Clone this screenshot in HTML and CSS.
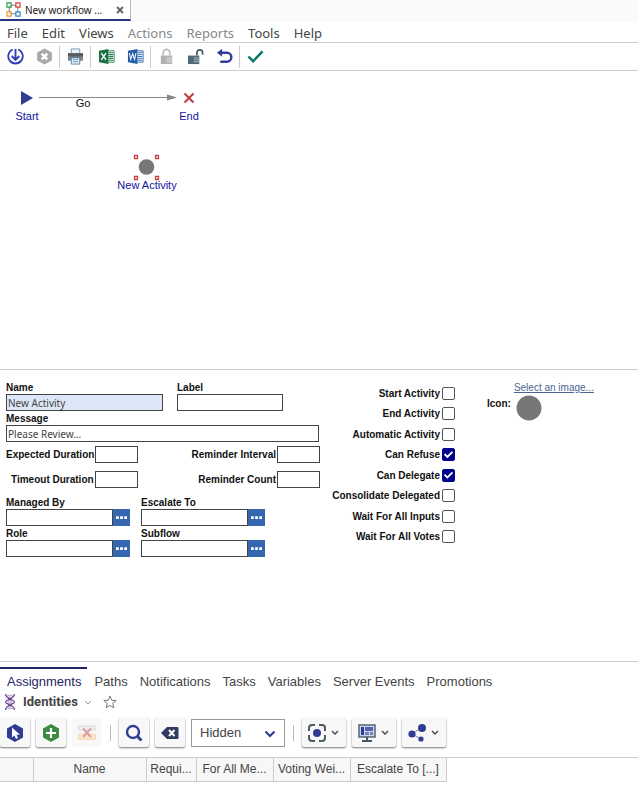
FILE: index.html
```html
<!DOCTYPE html>
<html lang="en">
<head>
<meta charset="utf-8">
<title>New workflow</title>
<link rel="stylesheet" href="styles.css">
</head>
<body>
<header class="window-tabs">
  <div class="window-tab">
    <svg class="flow-icon" viewBox="0 0 16 16" fill="none" stroke-width="1.3"><path d="M5 3.5h6M3.5 5v6M12.5 5v6M5 12.5h6" stroke="#6b7482" stroke-width="1"/><path d="M1 1h4.500v4.500H1z" stroke="#2f9b51"/><path d="M10.500 1H15v4.500h-4.500z" stroke="#d8403c"/><path d="M1 10.500h4.500V15H1z" stroke="#e99a2c"/><path d="M10.500 10.500H15V15h-4.500z" stroke="#3288cf"/></svg>
    <span class="window-title">New workflow ...</span>
    <button class="close" aria-label="Close tab"><svg viewBox="0 0 8 8"><path d="M1 1l6 6M7 1L1 7" stroke="#666" stroke-width="2"/></svg></button>
  </div>
</header>
<nav class="menu">
  <a href="#">File</a><a href="#">Edit</a><a href="#">Views</a><a href="#" class="off">Actions</a><a href="#" class="off">Reports</a><a href="#">Tools</a><a href="#">Help</a>
</nav>
<div class="toolbar">
  <button aria-label="Save"><svg viewBox="0 0 18 18" fill="none" stroke="#2f3dba" stroke-width="1.900"><path d="M6 1.600a7.700 7.700 0 1 0 6 0"/><path d="M9 1v11M5 8.500l4 4 4-4" stroke-width="2"/></svg></button>
  <button aria-label="Cancel"><svg viewBox="0 0 18 18"><path d="M9 .5l7.800 4.300v8.400L9 17.500l-7.800-4.300V4.800z" fill="#a9a9a9"/><path d="M6 6l6 6M12 6l-6 6" stroke="#fff" stroke-width="2.600"/></svg></button>
  <i class="rule"></i>
  <button aria-label="Print"><svg viewBox="0 0 18 18"><path d="M4.500 1h9v6h-9z" fill="#eaf2f8" stroke="#7296b0"/><path d="M1 5.500h16v8H1z" fill="#7d8387"/><path d="M1 5.500h16V9H1z" fill="#565d62"/><path d="M4.500 10.500h9v6.500h-9z" fill="#fff" stroke="#537c9b"/><path d="M6 12.500h6M6 14.500h6" stroke="#4c91c3" stroke-width="1.200"/></svg></button>
  <i class="rule"></i>
  <button aria-label="Export to Excel"><svg viewBox="0 0 18 18"><path d="M9 3h8v12H9z" fill="#fff" stroke="#278150"/><path d="M11 5h5M11 7h5M11 9h5M11 11h5M11 13h5" stroke="#278150" stroke-width="1.200"/><path d="M1 3l10-2v16L1 15z" fill="#1d7145"/><path d="M3.500 5.500l5 7M8.500 5.500l-5 7" stroke="#fff" stroke-width="1.400"/></svg></button>
  <button aria-label="Export to Word"><svg viewBox="0 0 18 18"><path d="M9 3h8v12H9z" fill="#fff" stroke="#2b66af"/><path d="M11 5h5M11 7h5M11 9h5M11 11h5M11 13h5" stroke="#2b66af"/><path d="M1 3l10-2v16L1 15z" fill="#265da6"/><path d="M2.500 5.500L4 12l2-6 2 6 1.500-6.500" fill="none" stroke="#fff" stroke-width="1.100"/></svg></button>
  <i class="rule"></i>
  <button aria-label="Lock"><svg viewBox="0 0 18 18"><path d="M5.500 8V5a3.500 3.500 0 0 1 7 0v3" fill="none" stroke="#bcbcbc" stroke-width="1.800"/><path d="M3 8h12v9H3z" fill="#b2b2b2"/><path d="M9 10.500h6M9 12.500h6M9 14.500h6" stroke="#ddd"/></svg></button>
  <button aria-label="Unlock"><svg viewBox="0 0 18 18"><path d="M10.500 8V5a3 3 0 0 1 6 0v2" fill="none" stroke="#425763" stroke-width="1.800"/><path d="M1 8h12v9H1z" fill="#516a77"/><path d="M7 10.500h6M7 12.500h6M7 14.500h6" stroke="#aab7be"/></svg></button>
  <button aria-label="Undo"><svg viewBox="0 0 18 18" fill="none" stroke="#323f99" stroke-width="2.600"><path d="M4 5h7.500a4.700 4.700 0 0 1 0 9.500H4.500"/><path d="M6.500.8v8.400L1 5z" fill="#323f99" stroke="none"/></svg></button>
  <i class="rule"></i>
  <button aria-label="Approve"><svg viewBox="0 0 18 18"><path d="M1.500 9l5 5L16.500 3.500" fill="none" stroke="#08766a" stroke-width="2.600"/></svg></button>
</div>
<main>
  <section class="canvas" aria-label="Workflow diagram">
    <svg class="diagram" width="220" height="130" viewBox="0 0 220 130">
      <path d="M21 20v14l12-7z" fill="#313d94"/>
      <path d="M39 26.500h130" stroke="#888"/><path d="M167 23.500v6l10-3z" fill="#888"/>
      <path d="M184.500 22.500l9 9M193.500 22.500l-9 9" stroke="#c23a3c" stroke-width="2"/>
      <circle cx="146.500" cy="96" r="7.800" fill="#777"/>
      <g fill="#fff" stroke="#c94242" stroke-width="1.300"><path d="M134.500 84.500h3v3h-3zM155.500 84.500h3v3h-3zM134.500 105.500h3v3h-3zM155.500 105.500h3v3h-3z"/></g>
      <g class="node-text"><text x="27" y="49">Start</text><text x="189" y="49">End</text><text x="147" y="118">New Activity</text><text class="edge-text" x="83" y="36">Go</text></g>
    </svg>
  </section>
  <section class="properties">
    <form class="details">
      <div class="row names">
        <label class="stack wide">Name<input class="named" value="New Activity"></label>
        <label class="stack">Label<input></label>
      </div>
      <label class="stack">Message<input value="Please Review..."></label>
      <div class="row numbers"><label>Expected Duration<input></label><label>Reminder Interval<input></label></div>
      <div class="row numbers second"><label>Timeout Duration<input></label><label>Reminder Count<input></label></div>
      <div class="pickers">
        <div class="stack"><label for="managed">Managed By</label><div class="pick"><input id="managed"><button type="button" aria-label="Choose manager"><svg viewBox="0 0 12 3"><path d="M0 0h3v3H0zM4.500 0h3v3h-3zM9 0h3v3H9z" fill="#fff"/></svg></button></div></div>
        <div class="stack"><label for="escalate">Escalate To</label><div class="pick"><input id="escalate"><button type="button" aria-label="Choose escalation"><svg viewBox="0 0 12 3"><path d="M0 0h3v3H0zM4.500 0h3v3h-3zM9 0h3v3H9z" fill="#fff"/></svg></button></div></div>
        <div class="stack"><label for="role">Role</label><div class="pick"><input id="role"><button type="button" aria-label="Choose role"><svg viewBox="0 0 12 3"><path d="M0 0h3v3H0zM4.500 0h3v3h-3zM9 0h3v3H9z" fill="#fff"/></svg></button></div></div>
        <div class="stack"><label for="subflow">Subflow</label><div class="pick"><input id="subflow"><button type="button" aria-label="Choose subflow"><svg viewBox="0 0 12 3"><path d="M0 0h3v3H0zM4.500 0h3v3h-3zM9 0h3v3H9z" fill="#fff"/></svg></button></div></div>
      </div>
    </form>
    <div class="checks">
      <label>Start Activity<input type="checkbox"></label>
      <label>End Activity<input type="checkbox"></label>
      <label>Automatic Activity<input type="checkbox"></label>
      <label>Can Refuse<input type="checkbox" checked></label>
      <label>Can Delegate<input type="checkbox" checked></label>
      <label>Consolidate Delegated<input type="checkbox"></label>
      <label>Wait For All Inputs<input type="checkbox"></label>
      <label>Wait For All Votes<input type="checkbox"></label>
    </div>
    <div class="image-choice">
      <span>Icon:</span>
      <div><a href="#">Select an image...</a><svg width="26" height="26" viewBox="0 0 26 26"><circle cx="13" cy="13" r="12.500" fill="#777"/></svg></div>
    </div>
  </section>
</main>
<section class="related">
  <nav class="tabs">
    <a href="#" class="current">Assignments</a><a href="#">Paths</a><a href="#">Notifications</a><a href="#">Tasks</a><a href="#">Variables</a><a href="#">Server Events</a><a href="#">Promotions</a>
  </nav>
  <div class="heading">
    <svg class="dna" viewBox="0 0 12 18" fill="none"><path d="M3 1.500h6M4 3.500h4M4 7.500h4M3 9h6M4 10.500h4M4 14.500h4M3 16.500h6" stroke="#a98cc8"/><path d="M1 0c0 6 10 6 10 9s-10 3-10 9M11 0c0 6-10 6-10 9s10 3 10 9" stroke="#623b88" stroke-width="1.400"/></svg>
    <h2>Identities</h2>
    <svg class="chev" viewBox="0 0 8 5"><path d="M1 1l3 3 3-3" fill="none" stroke="#999"/></svg>
    <svg class="star" viewBox="0 0 14 14"><path d="M7 1l1.700 4.200 4.500.3-3.500 2.900 1.200 4.500L7 10.400l-3.900 2.500 1.200-4.500L.8 5.500l4.500-.3z" fill="none" stroke="#777"/></svg>
  </div>
  <div class="actions">
    <button aria-label="Select"><svg viewBox="0 0 20 20"><path d="M10 1l8 4.500v9L10 19l-8-4.500v-9z" fill="#303c92"/><path d="M7 4.500v10l2.500-2 1.500 3.500 2-1-1.500-3.300H15z" fill="#fff"/></svg></button>
    <button aria-label="Add"><svg viewBox="0 0 20 20"><path d="M10 1l8 4.500v9L10 19l-8-4.500v-9z" fill="#3b8c40"/><path d="M10 5v10M5 10h10" stroke="#fff" stroke-width="2.200"/></svg></button>
    <button aria-label="Remove" class="disabled" disabled><svg viewBox="0 0 20 20"><path d="M1.500 3h17v4h-17z" fill="#eceff0" stroke="#d8dcdd"/><path d="M1.500 11h17v5.500h-17z" fill="#fce6cb" stroke="#f7d9b8"/><path d="M6 5.500l8 8.500M14 5.500L6 14" stroke="#e29b9d" stroke-width="2.200"/></svg></button>
    <i class="rule"></i>
    <button aria-label="Search"><svg viewBox="0 0 20 20" fill="none" stroke="#303c92"><circle cx="9" cy="9" r="6" stroke-width="2.400"/><path d="M13.500 13.500l4 4" stroke-width="3"/></svg></button>
    <button aria-label="Clear"><svg viewBox="0 0 20 20"><path d="M7 4h10.500q1 0 1 1v10q0 1-1 1H7l-6-6z" fill="#303b61"/><path d="M9 7l5.500 6M14.500 7L9 13" stroke="#fff" stroke-width="2"/></svg></button>
    <div class="select"><select aria-label="Filter mode"><option>Hidden</option></select><svg viewBox="0 0 12 8"><path d="M1.500 1.500L6 6l4.500-4.500" fill="none" stroke="#303c92" stroke-width="2.200"/></svg></div>
    <i class="rule"></i>
    <button aria-label="Focus" class="drop"><svg viewBox="0 0 20 20"><path d="M2 8V5q0-3 3-3h3M12 2h3q3 0 3 3v3M18 12v3q0 3-3 3h-3M8 18H5q-3 0-3-3v-3" fill="none" stroke="#4c5c64" stroke-width="2"/><circle cx="10" cy="10" r="4" fill="#303c92"/></svg><svg class="arrow" viewBox="0 0 8 5"><path d="M1 1l3 3 3-3" fill="none" stroke="#444" stroke-width="1.400"/></svg></button>
    <button aria-label="Display" class="drop"><svg viewBox="0 0 20 20"><path d="M2 2h16v12H2z" fill="#cdd5ee" stroke="#526770" stroke-width="1.500"/><path d="M4 4h3v8H4z" fill="#303c92"/><path d="M8 4h8v4H8z" fill="#5561ad"/><path d="M8 9h4v3H8zM13 9h3v3h-3z" fill="#7682bc"/><path d="M10 14v3M5 18h10" stroke="#445966" stroke-width="2"/></svg><svg class="arrow" viewBox="0 0 8 5"><path d="M1 1l3 3 3-3" fill="none" stroke="#444" stroke-width="1.400"/></svg></button>
    <button aria-label="Share" class="drop"><svg viewBox="0 0 20 20"><path d="M14 5L5 11l9 5" fill="none" stroke="#7686a0"/><circle cx="15" cy="5" r="4" fill="#303c92"/><circle cx="5" cy="11" r="3.600" fill="#303c92"/><circle cx="14" cy="16" r="2.600" fill="#303c92"/></svg><svg class="arrow" viewBox="0 0 8 5"><path d="M1 1l3 3 3-3" fill="none" stroke="#444" stroke-width="1.400"/></svg></button>
  </div>
  <div class="grid">
    <table><colgroup><col class="c-mark"><col class="c-name"><col class="c-required"><col class="c-members"><col class="c-weight"><col class="c-escalate"></colgroup><thead><tr><td></td><th>Name</th><th>Requi...</th><th>For All Me...</th><th>Voting Wei...</th><th>Escalate To [...]</th></tr></thead></table>
  </div>
</section>
</body>
</html>
```
FILE: styles.css
```css
* { box-sizing: border-box; }
body { margin: 0; min-height: 100vh; display: flex; flex-direction: column; background: #fff; color: #444; font-family: "Liberation Sans", Arial, sans-serif; }
button { padding: 0; border: 0; background: none; display: flex; align-items: center; justify-content: center; }
svg { display: block; flex: none; }
a { color: inherit; text-decoration: none; }

.window-tabs { display: flex; height: 22px; background: #fafafa; }
.window-tab { display: flex; align-items: center; width: 131px; height: 21px; padding: 0 6px; background: #fff; border-right: 1px solid #bbb; border-bottom: 2px solid #28367f; }
.flow-icon { width: 15px; height: 15px; margin-right: 4px; }
.window-title { font: 10px/16px "Noto Sans", sans-serif; color: #222; white-space: nowrap; }
.close { margin-left: auto; }
.close svg { width: 8px; height: 8px; }

.menu { display: flex; gap: 14px; height: 20px; padding-left: 7px; font: 13px/22px "Noto Sans", sans-serif; }
.off { color: #888; }
.toolbar { display: flex; align-items: center; gap: 6px; height: 29px; padding-left: 4px; border-top: 1px solid #ccc; border-bottom: 1px solid #ccc; }
.toolbar button { width: 23px; height: 24px; }
.toolbar svg { width: 17px; height: 17px; }
.rule { width: 1px; height: 22px; background: #ccc; }
.toolbar .rule { margin: 0 -2px 0 -3px; }

main { flex: 1; display: flex; flex-direction: column; }
.canvas { flex: 1; min-height: 299px; border-bottom: 1px solid #ccc; }
.node-text { font-size: 11px; text-anchor: middle; fill: #1111a0; }
.edge-text { fill: #111; }
.properties { display: flex; min-height: 291px; padding: 12px 6px 0; color: #111; font-size: 10px; font-weight: bold; }
.details { width: 314px; }
.row, .numbers label { display: flex; justify-content: space-between; }
.names { justify-content: flex-start; gap: 14px; }
.stack { display: flex; flex-direction: column; width: 106px; line-height: 12px; }
.wide { width: 157px; }
.details > .stack { width: 313px; margin-top: 2px; }
.details input { width: 100%; height: 17px; margin: 0; padding: 1px 1px; border: 1px solid #444; font: 10px/14px "Noto Sans", sans-serif; color: #444; background: #fff; outline: 0; border-radius: 0; }
.details .named { background: #dce6f6; }
.numbers { margin-top: 4px; }
.second { margin-top: 8px; }
.numbers label { align-items: center; gap: 1px; }
.numbers input { width: 43px; }
.second label:first-child { margin-left: 5px; }
.pickers { display: grid; grid-template-columns: 124px 124px; gap: 2px 11px; margin-top: 9px; }
.pickers .stack { width: 124px; }
.pick { display: flex; }
.pick button { flex: 0 0 17px; height: 17px; background: #3567b0; }
.pick svg { width: 11px; height: 3px; }
.checks { width: 135px; height: 164px; margin-top: 1px; display: flex; flex-direction: column; align-items: flex-end; justify-content: space-between; }
.checks label { display: flex; align-items: center; gap: 2px; min-height: 20px; white-space: nowrap; }
.checks input { appearance: none; display: grid; place-items: center; width: 13px; height: 13px; margin: 0; border: 1px solid #555; border-radius: 2px; background: #fff; }
.checks input:checked { border-color: #00008c; background: #00008c; }
.checks input:checked::after { content: ""; width: 11px; height: 11px; background: #fff; clip-path: polygon(8% 50%, 20% 38%, 40% 58%, 80% 18%, 92% 30%, 40% 82%); }
.image-choice { display: flex; gap: 3px; margin-left: 32px; line-height: 12px; }
.image-choice span { margin-top: 16px; }
.image-choice a { color: #476791; text-decoration: underline; font-weight: normal; }
.image-choice svg { margin: 1px 2px; }

.related { border-top: 1px solid #ccc; height: 133px; }
.tabs { display: flex; gap: 12px; padding-left: 7px; font-size: 13px; line-height: 20px; margin-top: 5px; }
.tabs a { padding-top: 5px; }
.tabs .current { color: #252563; border-top: 2px solid #252563; margin: 0 -5px 0 -7px; padding: 3px 6px 0 7px; }
.heading { display: flex; align-items: center; height: 20px; padding-left: 4px; }
.dna { width: 12px; height: 16px; }
h2 { margin: 0 6px 0 7px; font: bold 13px/18px Roboto, sans-serif; }
.chev { width: 8px; height: 5px; }
.star { width: 14px; height: 14px; margin-left: 11px; }
.actions { display: flex; align-items: center; height: 41px; gap: 6px; padding: 1px 0; }
.actions button { width: 30px; height: 29px; border-radius: 2px; background: #f8f8f8; box-shadow: 0 1px 2px #777; }
.actions button.disabled { box-shadow: none; }
.actions button svg { width: 20px; height: 20px; }
.actions .rule { height: 16px; margin: 0 2px; background: #bbb; }
.actions .drop { width: 44px; gap: 4px; padding-right: 2px; }
.actions button .arrow { width: 8px; height: 5px; }
.select { position: relative; width: 94px; height: 28px; }
.select select { appearance: none; width: 100%; height: 100%; padding: 0 8px; border: 1px solid #999; border-radius: 0; background: #fff; color: #444; font: 13px "Liberation Sans", sans-serif; }
.select svg { position: absolute; right: 9px; top: 11px; width: 12px; height: 8px; pointer-events: none; }
.grid { margin-top: 4px; border-top: 1px solid #ccc; }
table { border-collapse: collapse; table-layout: fixed; width: 446px; }
td, th { height: 23px; padding: 0; border: 1px solid #ccc; border-top: 0; background: #f7f7f7; font-weight: normal; font-size: 12px; text-align: center; white-space: nowrap; }
td { border-left: 0; }
.c-mark { width: 33px; }
.c-name { width: 113px; }
.c-required { width: 50px; }
.c-members { width: 77px; }
.c-weight { width: 77px; }
.c-escalate { width: 96px; }
```
